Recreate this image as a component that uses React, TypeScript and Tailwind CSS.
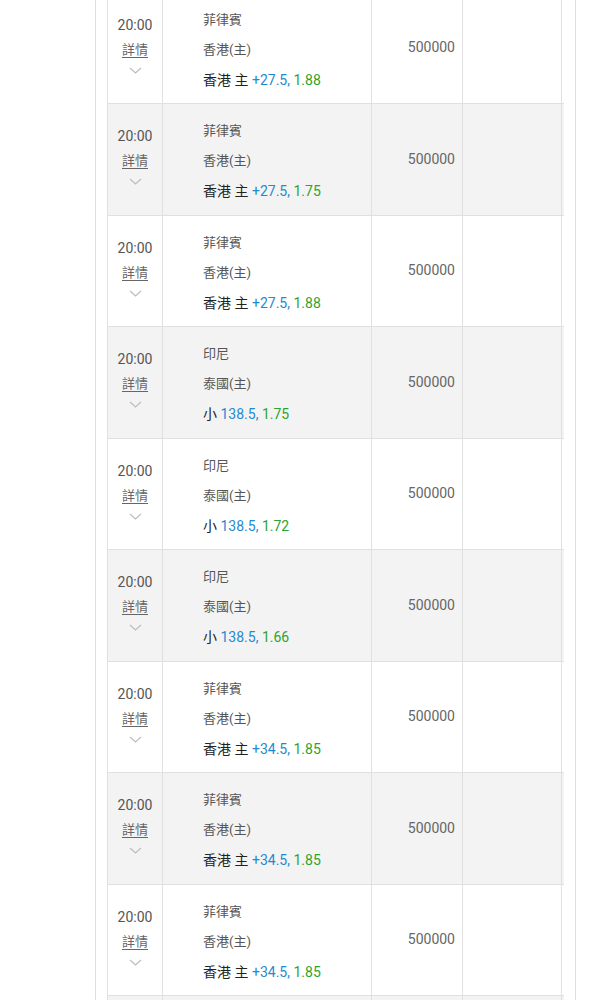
import React from "react";

type Bet = {
  league: string;
  match: string;
  pick: string;
  line: string;
  odds: string;
};

const rows: Bet[] = [
  { league: "菲律賓", match: "香港(主)", pick: "香港 主", line: "+27.5,", odds: "1.88" },
  { league: "菲律賓", match: "香港(主)", pick: "香港 主", line: "+27.5,", odds: "1.75" },
  { league: "菲律賓", match: "香港(主)", pick: "香港 主", line: "+27.5,", odds: "1.88" },
  { league: "印尼", match: "泰國(主)", pick: "小", line: "138.5,", odds: "1.75" },
  { league: "印尼", match: "泰國(主)", pick: "小", line: "138.5,", odds: "1.72" },
  { league: "印尼", match: "泰國(主)", pick: "小", line: "138.5,", odds: "1.66" },
  { league: "菲律賓", match: "香港(主)", pick: "香港 主", line: "+34.5,", odds: "1.85" },
  { league: "菲律賓", match: "香港(主)", pick: "香港 主", line: "+34.5,", odds: "1.85" },
  { league: "菲律賓", match: "香港(主)", pick: "香港 主", line: "+34.5,", odds: "1.85" },
];

const Chevron = () => (
  <svg width="13" height="7" viewBox="0 0 13 7" fill="none" className="mx-auto mt-[7px] block">
    <path d="M1 1l5.5 5 5.5-5" stroke="#bdbdbd" strokeWidth="1.2" />
  </svg>
);

const cols = "grid grid-cols-[55px_209px_91px_100px] border-t border-[#e0e0e0]";

const Row: React.FC<{ bet: Bet; shaded: boolean }> = ({ bet, shaded }) => {
  return (
    <div className={`${cols} h-[111.5px] ${shaded ? "bg-[#f3f3f3]" : "bg-white"}`}>
      <div className="border-l border-[#e0e0e0] pt-[22px] text-center">
        <div className="text-[14px] leading-[20px] text-[#555]">20:00</div>
        <div className="mt-[5px] text-[13px] leading-[20px] text-[#666] underline underline-offset-[3px]">
          詳情
        </div>
        <Chevron />
      </div>
      <div className="border-l border-[#e0e0e0] pl-[40px] pt-[12px] leading-[30px]">
        <div className="text-[13px] text-[#555]">{bet.league}</div>
        <div className="text-[13px] text-[#555]">{bet.match}</div>
        <div className="text-[14px] text-[#222]">
          {bet.pick} <span className="text-[#1f8ad0]">{bet.line}</span>{" "}
          <span className="text-[#2ea32e]">{bet.odds}</span>
        </div>
      </div>
      <div className="flex items-center justify-end border-l border-[#e0e0e0] pr-[7px] text-[14px] text-[#666]">
        500000
      </div>
      <div className="border-x border-[#e0e0e0]" />
    </div>
  );
};

export default function App() {
  return (
    <div
      className="h-[1000px] overflow-hidden bg-white"
      style={{ fontFamily: "Roboto, 'Noto Sans CJK TC', sans-serif" }}
    >
      <div className="ml-[95px] min-h-[1010px] w-[481px] border-x border-[#dedede] px-[11px]">
        <div className="-mt-[8.5px]">
          {rows.map((bet, i) => (
            <Row key={i} bet={bet} shaded={i % 2 === 1} />
          ))}
          {/* next row, only its top edge is on screen */}
          <div className={`${cols} h-[40px] bg-[#f3f3f3]`}>
            <div className="border-l border-[#e0e0e0]" />
            <div className="border-l border-[#e0e0e0]" />
            <div className="border-l border-[#e0e0e0]" />
            <div className="border-x border-[#e0e0e0]" />
          </div>
        </div>
      </div>
    </div>
  );
}
